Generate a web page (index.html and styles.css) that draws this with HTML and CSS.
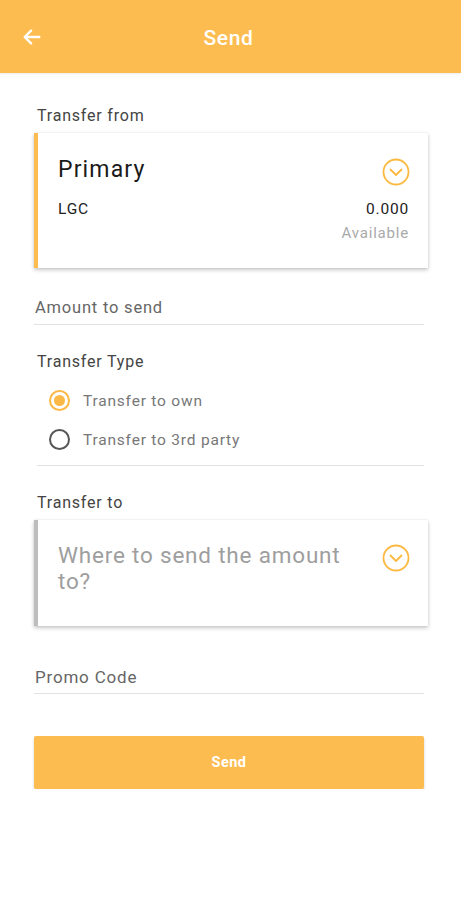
FILE: index.html
```html
<!DOCTYPE html>
<html>
<head>
<meta charset="utf-8">
<link rel="stylesheet" href="styles.css">
</head>
<body>
<header class="appbar">
  <svg class="back" width="22" height="22" viewBox="0 0 24 24"><path d="M20 12H5M11 5l-7 7 7 7" fill="none" stroke="#fff" stroke-width="2.6" stroke-linecap="round" stroke-linejoin="round"/></svg>
  <h1 class="title">Send</h1>
</header>
<main class="content">
  <div class="label label-from">Transfer from</div>
  <div class="card card-from">
    <div class="card-row">
      <div class="account">Primary</div>
      <svg class="chev" width="28" height="28" viewBox="0 0 28 28"><circle cx="14" cy="14" r="12.5" fill="none" stroke="#fbb940" stroke-width="1.8"/><path d="M8.5 11.5l5.5 5.5 5.5-5.5" fill="none" stroke="#fbb940" stroke-width="1.8" stroke-linecap="round" stroke-linejoin="round"/></svg>
    </div>
    <div class="card-row balance-row">
      <div class="currency">LGC</div>
      <div class="balance">
        <div class="amount">0.000</div>
        <div class="avail">Available</div>
      </div>
    </div>
  </div>

  <div class="field field-amount">Amount to send</div>

  <div class="label label-type">Transfer Type</div>
  <div class="radios">
    <div class="radio-row"><span class="radio on"></span><span class="radio-text">Transfer to own</span></div>
    <div class="radio-row"><span class="radio"></span><span class="radio-text">Transfer to 3rd party</span></div>
  </div>

  <div class="label label-to">Transfer to</div>
  <div class="card card-to">
    <div class="card-row">
      <div class="placeholder">Where to send the amount to?</div>
      <svg class="chev chev-to" width="28" height="28" viewBox="0 0 28 28"><circle cx="14" cy="14" r="12.5" fill="none" stroke="#fbb940" stroke-width="1.8"/><path d="M8.5 11.5l5.5 5.5 5.5-5.5" fill="none" stroke="#fbb940" stroke-width="1.8" stroke-linecap="round" stroke-linejoin="round"/></svg>
    </div>
  </div>

  <div class="field field-promo">Promo Code</div>

  <button class="send-btn">Send</button>
</main>
</body>
</html>
```
FILE: styles.css
```css
* { box-sizing: border-box; }
html, body { margin: 0; padding: 0; background: #fff; }
body { font-family: Roboto, "Noto Sans", Arial, sans-serif; width: 461px; letter-spacing: 0.05em; }

.appbar {
  height: 73px;
  background: #fdbc50;
  display: flex;
  align-items: center;
  position: relative;
  box-shadow: 0 1px 2px rgba(0,0,0,0.08);
}
.back { margin-left: 21px; margin-top: 0; }
.title {
  position: absolute;
  left: 0; right: 0;
  top: 24px;
  margin: 0;
  padding-right: 4px;
  text-align: center;
  color: #fff;
  font-size: 21px;
  font-weight: 500;
  line-height: 28px;
  letter-spacing: 0.03em;
}

.content { padding: 0 37px 0 34px; display: flex; flex-direction: column; }

.label { font-size: 16px; color: #444; padding-left: 3px; line-height: 20px; }
.label-from { margin-top: 33px; }

.card {
  background: #fff;
  margin-top: 7px;
  margin-right: -4px;
  box-shadow: 0 2px 4px rgba(0,0,0,0.22), 0 0 2px rgba(0,0,0,0.08);
}
.card-from { border-left: 4px solid #fdbc50; height: 135px; padding: 22px 19px 0 20px; }
.card-row { display: flex; justify-content: space-between; align-items: flex-start; }
.account { font-size: 23px; color: #1a1a1a; line-height: 30px; letter-spacing: 0.05em; }
.chev { margin-top: 3px; margin-right: -1px; flex-shrink: 0; }
.balance-row { margin-top: 13px; }
.currency { font-size: 15.5px; color: #222; line-height: 20px; }
.balance { text-align: right; }
.amount { font-size: 15.5px; color: #222; line-height: 20px; }
.avail { font-size: 15px; color: #aaa; line-height: 20px; margin-top: 4px; }

.field {
  font-size: 16.5px;
  color: #666;
  line-height: 22px;
  padding-left: 1px;
  border-bottom: 1px solid #e2e2e2;
}
.field-amount { margin-top: 29px; padding-bottom: 5px; }

.label-type { margin-top: 27px; }
.radios {
  margin-top: 9px;
  margin-left: 3px;
  border-bottom: 1px solid #e2e2e2;
  padding-bottom: 6px;
}
.radio-row { display: flex; align-items: center; height: 39px; }
.radio {
  width: 21px; height: 21px;
  border-radius: 50%;
  border: 2px solid #555;
  margin-left: 12px;
  margin-right: 13px;
  position: relative;
  flex-shrink: 0;
}
.radio.on { border-color: #fcb844; }
.radio.on::after {
  content: "";
  position: absolute;
  left: 3px; top: 3px;
  width: 11px; height: 11px;
  border-radius: 50%;
  background: #fcb844;
}
.radio-text { font-size: 15.5px; color: #777; }

.label-to { margin-top: 27px; }
.card-to { border-left: 4px solid #bdbdbd; height: 106px; padding: 22px 19px 0 20px; }
.placeholder { font-size: 22.5px; color: #9e9e9e; line-height: 26px; width: 305px; }
.chev-to { margin-top: 2px; }

.field-promo { margin-top: 40px; font-size: 17px; padding-bottom: 5px; }

.send-btn {
  margin-top: 42px;
  height: 53px;
  border: none;
  border-radius: 2px;
  background: #fdbc50;
  color: #fff;
  font-family: Roboto, Arial, sans-serif;
  font-size: 14.5px;
  font-weight: 700;
  letter-spacing: 0.03em;
  box-shadow: 0 2px 3px rgba(0,0,0,0.18);
}
```
